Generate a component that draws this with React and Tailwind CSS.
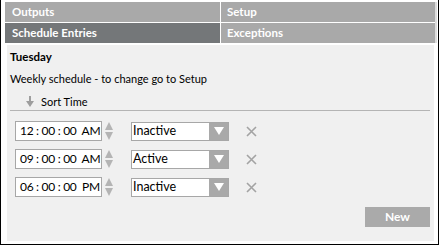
import React from 'react';

const rows = [
  { time: ['12', '00', '00', 'AM'], state: 'Inactive' },
  { time: ['09', '00', '00', 'AM'], state: 'Active' },
  { time: ['06', '00', '00', 'PM'], state: 'Inactive' },
];

function Spinner() {
  return (
    <svg width="10" height="20" viewBox="0 0 10 20" className="ml-[2px] shrink-0">
      <polygon points="5,1 9,9 1,9" fill="#b4b4b4" />
      <polygon points="1,11 9,11 5,19" fill="#b4b4b4" />
    </svg>
  );
}

function TimeBox({ time }) {
  return (
    <div className="flex items-center shrink-0">
      <div className="w-[87px] h-[20px] shrink-0 bg-white border border-[#a7a7a7] flex items-center pl-[4px] text-[12px] text-black whitespace-pre leading-none tracking-[-0.3px]">
        {`${time[0]} : ${time[1]} : ${time[2]}  ${time[3]}`}
      </div>
      <Spinner />
    </div>
  );
}

function StateSelect({ value }) {
  return (
    <div className="w-[98px] h-[19px] shrink-0 bg-white border border-[#a7a7a7] flex items-stretch">
      <div className="flex-1 flex items-center pl-[1px] text-[12.5px] text-black leading-none">{value}</div>
      <div className="w-[19px] bg-[#a9a9a9] flex items-center justify-center">
        <svg width="10" height="8" viewBox="0 0 10 8">
          <polygon points="0,0 10,0 5,8" fill="#ffffff" />
        </svg>
      </div>
    </div>
  );
}

function RemoveIcon() {
  return (
    <svg width="11" height="11" viewBox="0 0 11 11">
      <path d="M1 1 L10 10 M10 1 L1 10" stroke="#a3a3a3" strokeWidth="1.6" />
    </svg>
  );
}

export default function App() {
  return (
    <div
      className="w-[439px] h-[245px] bg-white border-l border-r border-b border-black flex flex-col pl-[4px] pr-[2px] pt-[2px]"
      style={{ fontFamily: 'Lato, "Open Sans", sans-serif' }}
    >
      {/* Tabs */}
      <div className="flex flex-col gap-[1px] border-r-2 border-[#dcdcdc] w-[432px]">
        <div className="flex gap-[1px] h-[20px]">
          <div className="w-[215px] bg-[#a9a9a9] text-white font-bold text-[11.5px] flex items-center pl-[7px]">Outputs</div>
          <div className="flex-1 bg-[#a9a9a9] text-white font-bold text-[11.5px] flex items-center pl-[6px]">Setup</div>
        </div>
        <div className="flex gap-[1px] h-[20px]">
          <div className="w-[215px] bg-[#747779] text-white font-bold text-[11.5px] flex items-center pl-[7px]">Schedule Entries</div>
          <div className="flex-1 bg-[#a9a9a9] text-white font-bold text-[11.5px] flex items-center pl-[6px]">Exceptions</div>
        </div>
      </div>

      {/* Panel */}
      <div className="mt-[2px] ml-[2px] w-[427px] h-[196px] bg-[#f0f0f0] flex flex-col pl-[3px] pr-[4px] text-[11px] text-black">
        <div className="font-bold mt-[4px] leading-[16px] text-[11.5px]">Tuesday</div>
        <div className="mt-[6px] leading-[16px]">Weekly schedule - to change go to Setup</div>
        <div className="mt-[6px] flex items-center h-[18px] border-b border-[#b4b4b4] pl-[16px]">
          <svg width="8" height="11" viewBox="0 0 8 11" className="shrink-0">
            <path d="M4 0 V6" stroke="#9e9e9e" strokeWidth="2" />
            <polygon points="0,5 8,5 4,11" fill="#9e9e9e" />
          </svg>
          <span className="ml-[7px] leading-none">Sort Time</span>
        </div>

        <div className="flex flex-col gap-[8px] mt-[10px] pl-[5px]">
          {rows.map((r, i) => (
            <div key={i} className="flex items-center">
              <TimeBox time={r.time} />
              <div className="ml-[17px]">
                <StateSelect value={r.state} />
              </div>
              <div className="ml-[17px] flex items-center">
                <RemoveIcon />
              </div>
            </div>
          ))}
        </div>

        <div className="flex-1" />
        <div className="flex justify-end mb-[14px]">
          <button className="w-[65px] h-[20px] bg-[#aaaaaa] text-white text-[12px] font-bold">New</button>
        </div>
      </div>
    </div>
  );
}
